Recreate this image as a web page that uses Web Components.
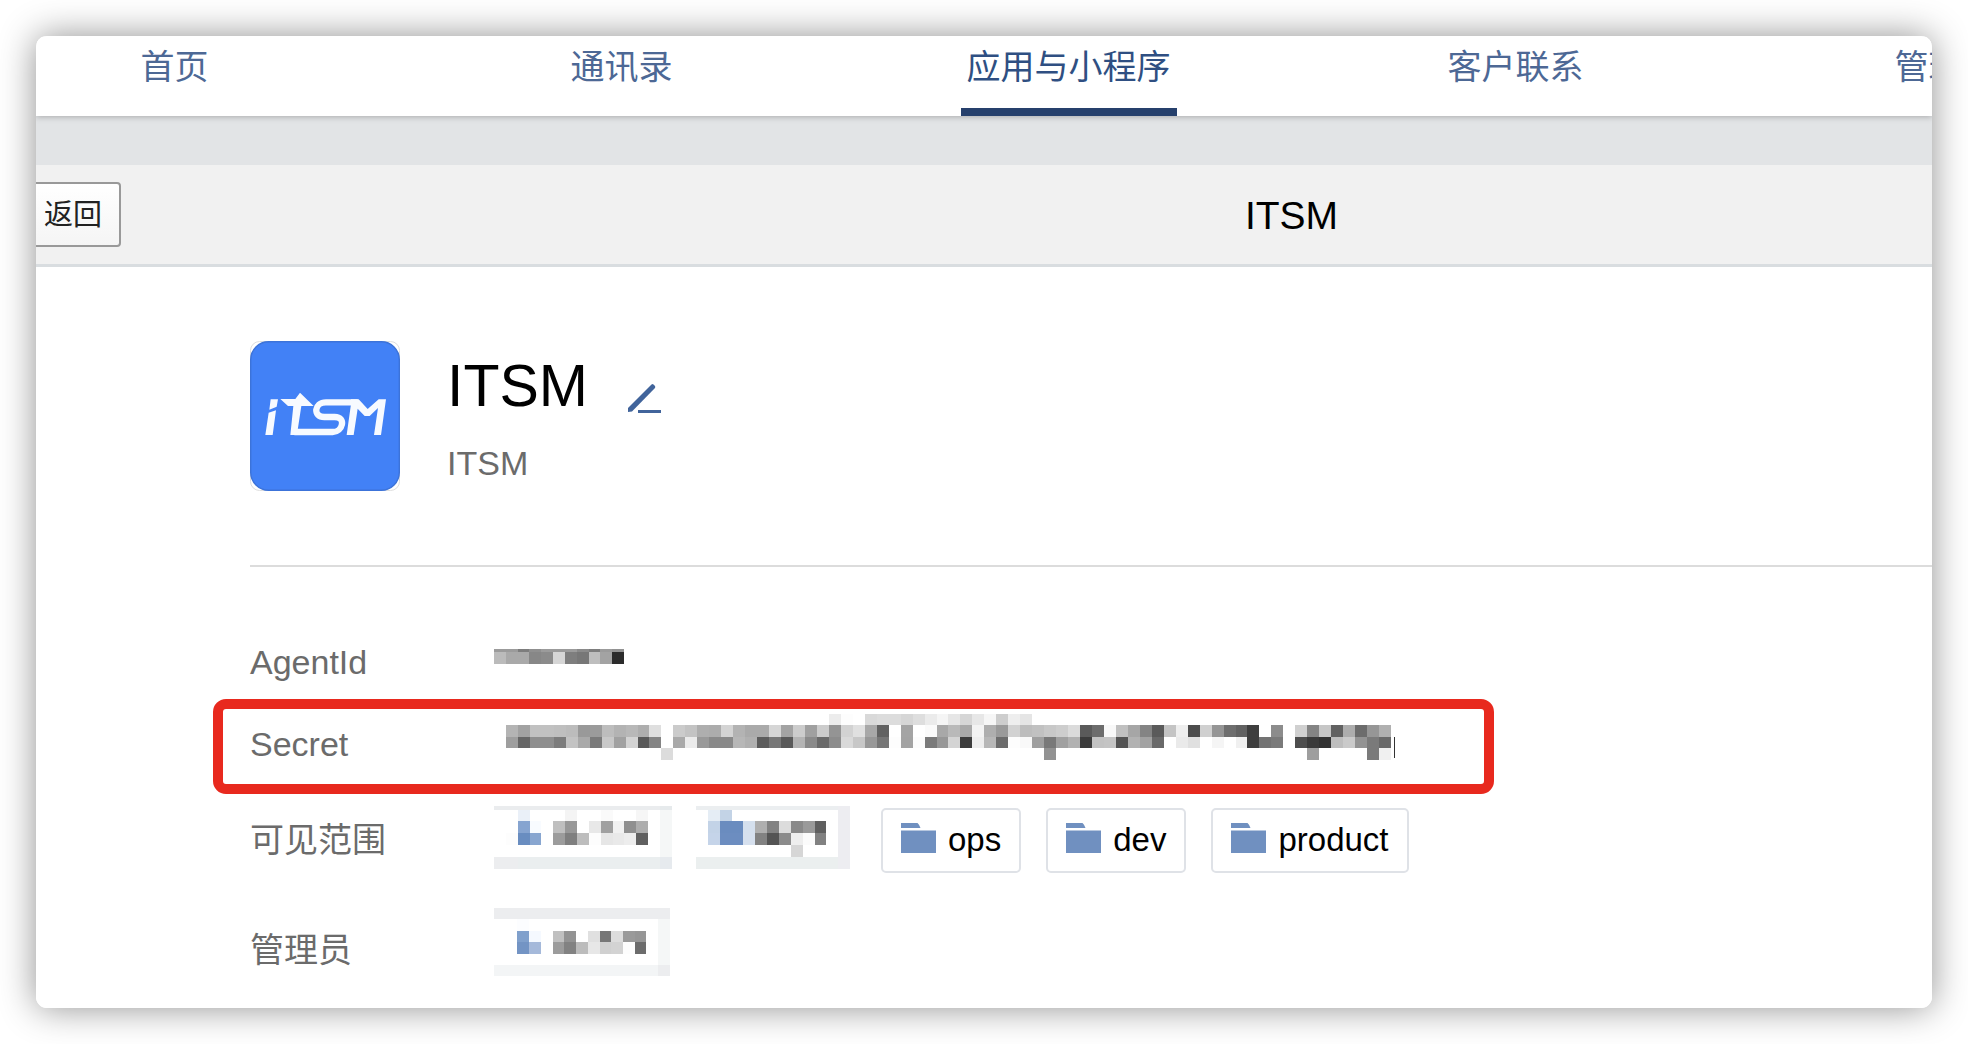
<!DOCTYPE html>
<html lang="zh-CN">
<head>
<meta charset="utf-8">
<title>ITSM</title>
<style>
  body {
    margin: 0;
    padding: 36px;
    background: #fff;
    font-family: "Liberation Sans", "Noto Sans CJK SC", sans-serif;
    font-size: 34px;
    line-height: 44px;
  }
</style>
</head>
<body>
<admin-window>
  <top-nav slot="nav">
    <nav-item>首页</nav-item>
    <nav-item>通讯录</nav-item>
    <nav-item active>应用与小程序</nav-item>
    <nav-item>客户联系</nav-item>
    <nav-item>管理工具</nav-item>
  </top-nav>
  <page-bar slot="bar" back="返回">ITSM</page-bar>
  <app-profile>
    <span slot="name">ITSM</span>
    <span slot="desc">ITSM</span>
  </app-profile>
  <detail-row label="AgentId"><pixel-mask id="agent"></pixel-mask></detail-row>
  <detail-row label="Secret" highlight><pixel-mask id="secret"></pixel-mask></detail-row>
  <detail-row label="可见范围" class="scope">
    <pixel-mask id="scope-a"></pixel-mask>
    <pixel-mask id="scope-b"></pixel-mask>
    <folder-tag>ops</folder-tag>
    <folder-tag>dev</folder-tag>
    <folder-tag>product</folder-tag>
  </detail-row>
  <detail-row label="管理员" class="manager"><pixel-mask id="manager"></pixel-mask></detail-row>
</admin-window>

<script>
const define = (name, html, setup) => {
  const template = document.createElement('template');
  template.innerHTML = html;
  customElements.define(name, class extends HTMLElement {
    constructor() {
      super();
      this.attachShadow({ mode: 'open' }).append(template.content.cloneNode(true));
    }
    connectedCallback() { if (setup) setup(this, this.shadowRoot); }
  });
};

define('admin-window', `
  <style>
    :host { display: block; border-radius: 11px; box-shadow: 0 0 36px rgba(0,0,0,.44); }
    .clip { border-radius: 11px; overflow: hidden; background: #fff; }
    .band { height: 49px; background: #e2e4e6; }
    main { padding-left: 214px; }
  </style>
  <div class="clip">
    <slot name="nav"></slot>
    <div class="band"></div>
    <slot name="bar"></slot>
    <main><slot></slot></main>
  </div>`);

define('top-nav', `
  <style>
    :host { display: block; position: relative; background: #fff; box-shadow: 0 1px 6px rgba(0,0,0,.25); }
    nav { display: flex; margin-left: -85px; }
  </style>
  <nav><slot></slot></nav>`);

define('nav-item', `
  <style>
    :host { display: flex; flex: 0 0 447px; justify-content: center; }
    a { display: block; height: 72px; padding: 0 6px; line-height: 62px; color: #4d6895;
        text-decoration: none; border-bottom: 8px solid transparent; white-space: nowrap; }
    :host([active]) a { color: #2f4f82; border-color: #26406c; }
  </style>
  <a href="#"><slot></slot></a>`);

define('page-bar', `
  <style>
    :host { display: flex; align-items: center; height: 99px; background: #f1f1f1;
            border-bottom: 3px solid #d9dde0; }
    button { box-sizing: border-box; height: 65px; margin: 0 0 0 -16px; padding: 0 17px 0 22px;
             border: 2px solid #999; border-radius: 4px;
             background: linear-gradient(#fff, #f5f5f5); color: #222; font: inherit; font-size: 29px; }
    h1 { flex: 1; margin: 0; padding: 2px 0 0 530px; text-align: center; font-size: 39px; font-weight: 400; color: #000; }
  </style>
  <button type="button"></button>
  <h1><slot></slot></h1>`,
  (el, root) => { root.querySelector('button').textContent = el.getAttribute('back'); });

define('app-profile', `
  <style>
    :host { display: flex; align-items: center; gap: 47px; padding: 74px 0; margin-bottom: 58px;
            border-bottom: 2px solid #dcdcdc; }
    .logo { display: block; width: 150px; height: 150px; }
    .text { display: flex; flex-direction: column; gap: 20px; padding-top: 3px; }
    .title { display: flex; align-items: flex-end; gap: 40px; }
    h2 { margin: 0; font-size: 59px; line-height: 70px; font-weight: 400; color: #000; }
    p { margin: 0; color: #6b6b6b; }
    button { display: flex; padding: 0 0 8px; border: 0; background: none; }
  </style>
  <svg class="logo" viewBox="0 0 150 150" aria-hidden="true">
    <rect x=".5" y=".5" width="149" height="149" rx="9" fill="#fff" stroke="#dedede"/>
    <rect x=".7" y=".7" width="148.6" height="148.6" rx="18" fill="#4281f6" stroke="#3c73d9" stroke-width="1.4"/>
    <g transform="translate(-4 39) scale(.33333)" fill="#f7faff">
      <path d="M74 58H96L92 80L70 89ZM68 98L90 91L80 165H58Z"/>
      <path d="M103 57H148L162 38L203 78H166L155 150L148 165H133L142 78H126Z"/>
      <path d="M335 67H240C204 67 200 111 235 111H266C302 111 290 156 260 156H145" fill="none" stroke="#f7faff" stroke-width="19"/>
      <path d="M315 58H338L365 87L398 58H420L405 165H384L396 84L371 108H356L335 86L323 165H302L315 72Z"/>
    </g>
  </svg>
  <div class="text">
    <div class="title">
      <h2><slot name="name"></slot></h2>
      <button type="button" aria-label="编辑">
        <svg width="34" height="30" viewBox="0 0 34 30">
          <path d="M0 29V25L23.500 1.500Q24.500 .5 25.500 1.500L27 3Q27.500 4 27 5L4 28.500Z" fill="#41649b"/>
          <path d="M10 27H33V30H10Z" fill="#41649b"/>
        </svg>
      </button>
    </div>
    <p><slot name="desc"></slot></p>
  </div>`);

define('detail-row', `
  <style>
    :host { display: flex; align-items: center; height: 74px; }
    :host([highlight]) { box-sizing: border-box; width: fit-content; height: 95px; margin-left: -37px;
      padding: 0 93px 5px 27px; border: 10px solid #e8291e; border-radius: 13px; }
    :host(.scope) { height: 92px; }
    :host(.manager) { height: 117px; padding-top: 5px; }
    .label { flex: 0 0 244px; color: #6b6b6b; }
    .value { display: flex; align-items: center; gap: 25px; }
  </style>
  <div class="label"></div>
  <div class="value"><slot></slot></div>`,
  (el, root) => { root.querySelector('.label').textContent = el.getAttribute('label'); });

define('folder-tag', `
  <style>
    :host { display: flex; align-items: center; gap: 12px; box-sizing: border-box; height: 65px;
            padding: 0 18px; border: 2px solid #dfe2e7; border-radius: 5px; color: #000; font-size: 33px; }
    svg { display: block; flex: none; }
  </style>
  <svg width="35" height="34" viewBox="0 0 35 34" fill="#7090c0" aria-hidden="true">
    <path d="M0 0H16.500Q18 1 19.500 5H0ZM0 7.500H35V30H0Z"/>
  </svg>
  <span><slot></slot></span>`);

/* Redacted values: each mask is a grid of flat cells. A two-digit cell is a grey
   level, "--" is empty, and "*n" repeats the cell before it. */
const masks = {
  agent: {
    width: 130, cell: 11.83, pad: 12,
    rows: [
      [3.3, '9b*2 7d 8f 9b*3 8a 7d 9b 92'],
      [11.3, 'bb a9*2 87 8b d6 7e 77 be a3 2b']
    ]
  },
  secret: {
    width: 897, cell: 11.96, pad: 14, caret: 900,
    rows: [
      [11.4, '--*28 ec fd -- d9 dc dc d6 de eb f5 e6 d6 e7 f6 cd ee e5'],
      [11.4, '-- b4 a2 c1 c1 bf bc 99 9b bd b3 b8 ae df -- cb c3 ae ac d4 b3 aa aa d6 a3 cc a0 cc 94 d2 e0 a8 62 -- a4 -- fa a8 b9 a9 f3 ae 9a d2 bd c1 c8 cd db 5a 6c f8 c0 a6 84 5a c4 ee 4c d0 95 6e 62 3e -- 8c -- d0 84 c6 61 ad 6c 96 b0'],
      [11.4, '-- 9e 66 8e 8e 7c c3 a9 7a c8 a1 d3 59 84 -- a9 eb 99 89 89 b7 b0 5c 77 59 b4 8a 6a 8c d9 c7 98 76 fd a3 fc 7a 97 d4 3c ee b7 6c fd f9 9f 79 a0 b1 3b c2 c4 53 b2 a2 69 -- ea e0 -- f5 -- f0 3e 73 7a -- 4d 3a 32 be ca 93 7a 69'],
      [11.4, '--*14 dc --*31 92 --*21 9e --*4 7a f0']
    ]
  },
  'scope-a': {
    width: 177, cell: 11.86, pad: 6,
    rows: [
      [3.5, 'eaecee*14 e6eaec'],
      [11.8, '--*2 eaf0f8 --*3 f4 --*2 fa --*2 f6 -- f5f7f7'],
      [11.8, '--*2 86a4d0 f8fbff -- bf 98 -- e8 a0 f1 8f ad -- f5f7f7'],
      [11.8, '-- fd 698dc0 88a6d0 -- 9c 7f bd fd e6 e9 ed 60 -- f5f7f7'],
      [11.8, '--*14 f5f7f7'],
      [11.8, 'ecedef*2 eaeeef*12 e6eaee']
    ]
  },
  'scope-b': {
    width: 160, cell: 11.86, pad: 6,
    rows: [
      [3.5, 'ebeef0*12 ededf1'],
      [11.8, '-- e5edf5 c3d3e6 --*9 ededf1'],
      [11.8, '-- c3d3e7 6a8cbf*2 d5e0ee af 82 dc 89 9a 5f -- ededf1'],
      [11.8, '-- c5d4e9 6c8dc0*2 d6e0ee 82 54 8b ee fb 81 -- ededf1'],
      [11.8, '--*8 d6 --*3 ededf1'],
      [11.8, 'ebefef*12 ededf1']
    ]
  },
  manager: {
    width: 176, cell: 11.73, pad: 16,
    rows: [
      [11.4, 'ecedef*15'],
      [11.4, '--*2 fcfdff --*11 f5f7f7'],
      [11.4, '--*2 80a0cc f5f9ff -- c0 93 -- e0 77 dd 9a 96 -- f5f7f7'],
      [11.4, '--*2 7394c4 a5b9da -- 9c 82 bc e7 d0 d3 fd 6c -- f5f7f7'],
      [11.4, '--*14 f5f7f7'],
      [11.4, 'f3f5f6*14 ecedef']
    ]
  }
};

define('pixel-mask', `
  <style>
    :host { display: block; }
    svg { display: block; overflow: visible; shape-rendering: crispEdges; }
  </style>
  <svg aria-hidden="true"></svg>`,
  (el, root) => {
    const mask = masks[el.id];
    let y = 0, out = '';
    for (const [height, cells] of mask.rows) {
      let col = 0;
      for (const token of cells.split(' ')) {
        const [colour, times = 1] = token.split('*');
        for (let n = 0; n < times; n++, col++) {
          if (colour === '--') continue;
          const fill = colour.length === 2 ? colour.repeat(3) : colour;
          out += `<rect x="${col * mask.cell}" y="${y}" width="${mask.cell}" height="${height}" fill="#${fill}"/>`;
        }
      }
      y += height;
    }
    if (mask.caret) out += `<rect x="${mask.caret}" y="23" width="1" height="21" fill="#333"/>`;
    const svg = root.querySelector('svg');
    svg.setAttribute('width', mask.width);
    svg.setAttribute('height', Math.round(y + mask.pad));
    svg.innerHTML = out;
  });
</script>
</body>
</html>
